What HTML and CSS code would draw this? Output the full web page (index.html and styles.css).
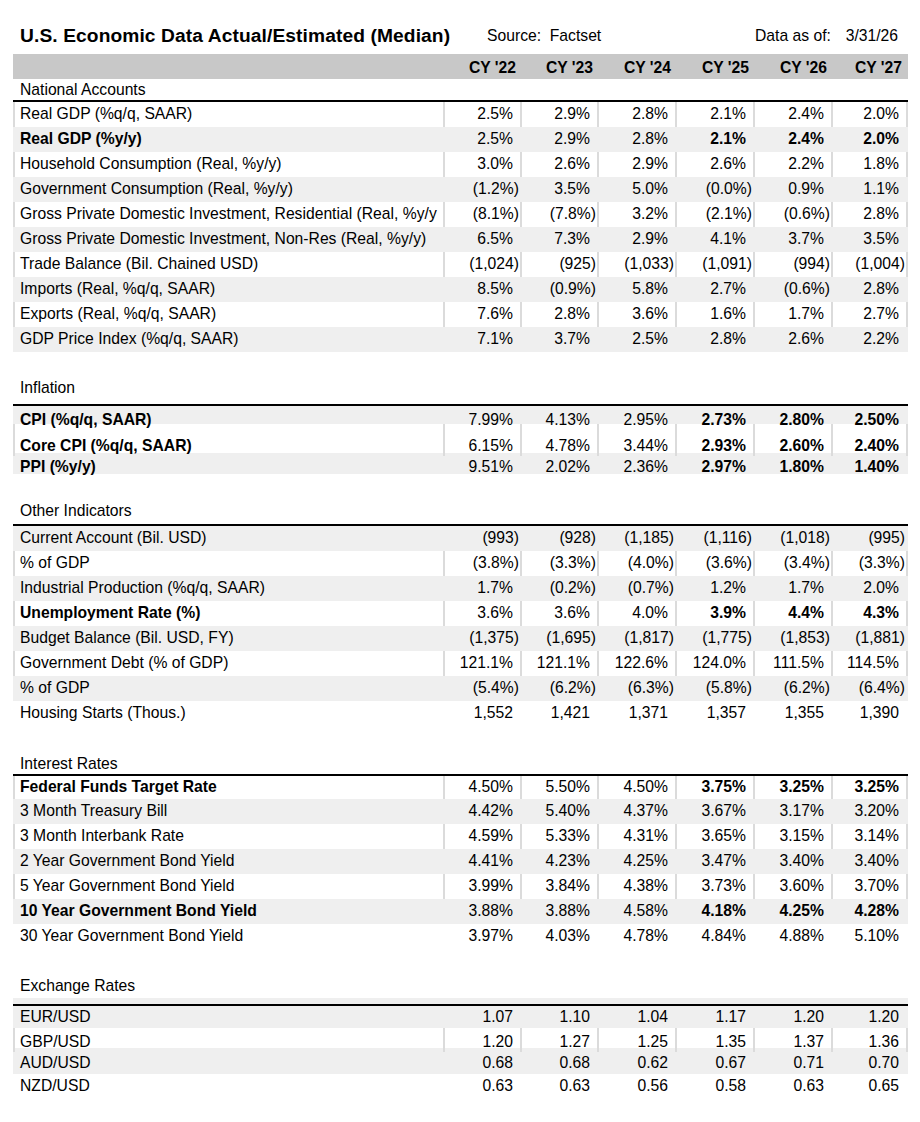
FILE: index.html
```html
<!DOCTYPE html>
<html lang="en">
<head>
<meta charset="utf-8">
<title>U.S. Economic Data Actual/Estimated (Median)</title>
<link rel="stylesheet" href="styles.css">
</head>
<body>
<div class="sheet">
  <div class="grid title-row">
    <div class="title">U.S. Economic Data Actual/Estimated (Median)</div>
    <div class="source">Source:&nbsp; Factset</div>
    <div class="asof-label">Data as of:</div>
    <div class="asof-date">3/31/26</div>
  </div>

  <div class="grid head-bar">
    <div class="c"></div>
    <div class="c h">CY '22</div><div class="c h">CY '23</div><div class="c h">CY '24</div>
    <div class="c h">CY '25</div><div class="c h">CY '26</div><div class="c h">CY '27</div>
  </div>

  <div class="sec-head sec-na">National Accounts</div>
  <div class="grid row sep"><div class="c l">Real GDP (%q/q, SAAR)</div><div class="c v">2.5%</div><div class="c v">2.9%</div><div class="c v">2.8%</div><div class="c v">2.1%</div><div class="c v">2.4%</div><div class="c v">2.0%</div></div>
  <div class="grid row shade"><div class="c l b">Real GDP (%y/y)</div><div class="c v">2.5%</div><div class="c v">2.9%</div><div class="c v">2.8%</div><div class="c v b">2.1%</div><div class="c v b">2.4%</div><div class="c v b">2.0%</div></div>
  <div class="grid row sep"><div class="c l">Household Consumption (Real, %y/y)</div><div class="c v">3.0%</div><div class="c v">2.6%</div><div class="c v">2.9%</div><div class="c v">2.6%</div><div class="c v">2.2%</div><div class="c v">1.8%</div></div>
  <div class="grid row shade"><div class="c l">Government Consumption (Real, %y/y)</div><div class="c v n">(1.2%)</div><div class="c v">3.5%</div><div class="c v">5.0%</div><div class="c v n">(0.0%)</div><div class="c v">0.9%</div><div class="c v">1.1%</div></div>
  <div class="grid row sep"><div class="c l">Gross Private Domestic Investment, Residential (Real, %y/y</div><div class="c v n">(8.1%)</div><div class="c v n">(7.8%)</div><div class="c v">3.2%</div><div class="c v n">(2.1%)</div><div class="c v n">(0.6%)</div><div class="c v">2.8%</div></div>
  <div class="grid row shade"><div class="c l">Gross Private Domestic Investment, Non-Res (Real, %y/y)</div><div class="c v">6.5%</div><div class="c v">7.3%</div><div class="c v">2.9%</div><div class="c v">4.1%</div><div class="c v">3.7%</div><div class="c v">3.5%</div></div>
  <div class="grid row sep"><div class="c l">Trade Balance (Bil. Chained USD)</div><div class="c v n">(1,024)</div><div class="c v n">(925)</div><div class="c v n">(1,033)</div><div class="c v n">(1,091)</div><div class="c v n">(994)</div><div class="c v n">(1,004)</div></div>
  <div class="grid row shade"><div class="c l">Imports (Real, %q/q, SAAR)</div><div class="c v">8.5%</div><div class="c v n">(0.9%)</div><div class="c v">5.8%</div><div class="c v">2.7%</div><div class="c v n">(0.6%)</div><div class="c v">2.8%</div></div>
  <div class="grid row sep"><div class="c l">Exports (Real, %q/q, SAAR)</div><div class="c v">7.6%</div><div class="c v">2.8%</div><div class="c v">3.6%</div><div class="c v">1.6%</div><div class="c v">1.7%</div><div class="c v">2.7%</div></div>
  <div class="grid row shade"><div class="c l">GDP Price Index (%q/q, SAAR)</div><div class="c v">7.1%</div><div class="c v">3.7%</div><div class="c v">2.5%</div><div class="c v">2.8%</div><div class="c v">2.6%</div><div class="c v">2.2%</div></div>

  <div class="sec-head sec-infl">Inflation</div>
  <div class="grid row shade row-cpi"><div class="c l b">CPI (%q/q, SAAR)</div><div class="c v">7.99%</div><div class="c v">4.13%</div><div class="c v">2.95%</div><div class="c v b">2.73%</div><div class="c v b">2.80%</div><div class="c v b">2.50%</div></div>
  <div class="grid row sep row-core"><div class="c l b">Core CPI (%q/q, SAAR)</div><div class="c v">6.15%</div><div class="c v">4.78%</div><div class="c v">3.44%</div><div class="c v b">2.93%</div><div class="c v b">2.60%</div><div class="c v b">2.40%</div></div>
  <div class="grid row shade row-ppi"><div class="c l b">PPI (%y/y)</div><div class="c v">9.51%</div><div class="c v">2.02%</div><div class="c v">2.36%</div><div class="c v b">2.97%</div><div class="c v b">1.80%</div><div class="c v b">1.40%</div></div>

  <div class="sec-head sec-other">Other Indicators</div>
  <div class="grid row shade"><div class="c l">Current Account (Bil. USD)</div><div class="c v n">(993)</div><div class="c v n">(928)</div><div class="c v n">(1,185)</div><div class="c v n">(1,116)</div><div class="c v n">(1,018)</div><div class="c v n">(995)</div></div>
  <div class="grid row sep"><div class="c l">% of GDP</div><div class="c v n">(3.8%)</div><div class="c v n">(3.3%)</div><div class="c v n">(4.0%)</div><div class="c v n">(3.6%)</div><div class="c v n">(3.4%)</div><div class="c v n">(3.3%)</div></div>
  <div class="grid row shade"><div class="c l">Industrial Production (%q/q, SAAR)</div><div class="c v">1.7%</div><div class="c v n">(0.2%)</div><div class="c v n">(0.7%)</div><div class="c v">1.2%</div><div class="c v">1.7%</div><div class="c v">2.0%</div></div>
  <div class="grid row sep"><div class="c l b">Unemployment Rate (%)</div><div class="c v">3.6%</div><div class="c v">3.6%</div><div class="c v">4.0%</div><div class="c v b">3.9%</div><div class="c v b">4.4%</div><div class="c v b">4.3%</div></div>
  <div class="grid row shade"><div class="c l">Budget Balance (Bil. USD, FY)</div><div class="c v n">(1,375)</div><div class="c v n">(1,695)</div><div class="c v n">(1,817)</div><div class="c v n">(1,775)</div><div class="c v n">(1,853)</div><div class="c v n">(1,881)</div></div>
  <div class="grid row sep"><div class="c l">Government Debt (% of GDP)</div><div class="c v">121.1%</div><div class="c v">121.1%</div><div class="c v">122.6%</div><div class="c v">124.0%</div><div class="c v">111.5%</div><div class="c v">114.5%</div></div>
  <div class="grid row shade"><div class="c l">% of GDP</div><div class="c v n">(5.4%)</div><div class="c v n">(6.2%)</div><div class="c v n">(6.3%)</div><div class="c v n">(5.8%)</div><div class="c v n">(6.2%)</div><div class="c v n">(6.4%)</div></div>
  <div class="grid row"><div class="c l">Housing Starts (Thous.)</div><div class="c v">1,552</div><div class="c v">1,421</div><div class="c v">1,371</div><div class="c v">1,357</div><div class="c v">1,355</div><div class="c v">1,390</div></div>

  <div class="sec-head sec-rates">Interest Rates</div>
  <div class="grid row sep row-fed"><div class="c l b">Federal Funds Target Rate</div><div class="c v">4.50%</div><div class="c v">5.50%</div><div class="c v">4.50%</div><div class="c v b">3.75%</div><div class="c v b">3.25%</div><div class="c v b">3.25%</div></div>
  <div class="grid row shade"><div class="c l">3 Month Treasury Bill</div><div class="c v">4.42%</div><div class="c v">5.40%</div><div class="c v">4.37%</div><div class="c v">3.67%</div><div class="c v">3.17%</div><div class="c v">3.20%</div></div>
  <div class="grid row sep"><div class="c l">3 Month Interbank Rate</div><div class="c v">4.59%</div><div class="c v">5.33%</div><div class="c v">4.31%</div><div class="c v">3.65%</div><div class="c v">3.15%</div><div class="c v">3.14%</div></div>
  <div class="grid row shade"><div class="c l">2 Year Government Bond Yield</div><div class="c v">4.41%</div><div class="c v">4.23%</div><div class="c v">4.25%</div><div class="c v">3.47%</div><div class="c v">3.40%</div><div class="c v">3.40%</div></div>
  <div class="grid row sep"><div class="c l">5 Year Government Bond Yield</div><div class="c v">3.99%</div><div class="c v">3.84%</div><div class="c v">4.38%</div><div class="c v">3.73%</div><div class="c v">3.60%</div><div class="c v">3.70%</div></div>
  <div class="grid row shade"><div class="c l b">10 Year Government Bond Yield</div><div class="c v">3.88%</div><div class="c v">3.88%</div><div class="c v">4.58%</div><div class="c v b">4.18%</div><div class="c v b">4.25%</div><div class="c v b">4.28%</div></div>
  <div class="grid row"><div class="c l">30 Year Government Bond Yield</div><div class="c v">3.97%</div><div class="c v">4.03%</div><div class="c v">4.78%</div><div class="c v">4.84%</div><div class="c v">4.88%</div><div class="c v">5.10%</div></div>

  <div class="sec-head sec-fx">Exchange Rates</div>
  <div class="fx-strip"></div>
  <div class="grid row shade row-eur"><div class="c l">EUR/USD</div><div class="c v">1.07</div><div class="c v">1.10</div><div class="c v">1.04</div><div class="c v">1.17</div><div class="c v">1.20</div><div class="c v">1.20</div></div>
  <div class="grid row sep row-gbp"><div class="c l">GBP/USD</div><div class="c v">1.20</div><div class="c v">1.27</div><div class="c v">1.25</div><div class="c v">1.35</div><div class="c v">1.37</div><div class="c v">1.36</div></div>
  <div class="grid row shade row-aud"><div class="c l">AUD/USD</div><div class="c v">0.68</div><div class="c v">0.68</div><div class="c v">0.62</div><div class="c v">0.67</div><div class="c v">0.71</div><div class="c v">0.70</div></div>
  <div class="grid row"><div class="c l">NZD/USD</div><div class="c v">0.63</div><div class="c v">0.63</div><div class="c v">0.56</div><div class="c v">0.58</div><div class="c v">0.63</div><div class="c v">0.65</div></div>
</div>
</body>
</html>
```

FILE: styles.css
```css
* { box-sizing: border-box; }

html, body {
  margin: 0;
  padding: 0;
  background: #ffffff;
}

body {
  font-family: "Liberation Sans", Arial, sans-serif;
  font-size: 15.7px;
  color: #000;
}

.sheet {
  width: 895px;
  margin-left: 13px;
  padding-top: 17px;
}

.grid {
  display: grid;
  grid-template-columns: 432px 77px 77px 78px 78px 78px 75px;
}

/* title line */
.title-row {
  height: 37px;
  align-items: center;
  white-space: nowrap;
}
.title {
  font-size: 19.2px;
  font-weight: bold;
  padding-left: 7px;
  letter-spacing: 0.1px;
}
.source {
  grid-column: 2 / 4;
  padding-left: 42px;
}
.asof-label {
  grid-column: 6 / 7;
  text-align: right;
  padding-right: 7px;
}
.asof-date {
  grid-column: 7 / 8;
  text-align: right;
  padding-right: 10px;
}

/* column header bar */
.head-bar {
  height: 25px;
  background: #c8c8c8;
}
.head-bar .c {
  padding-top: 4px;
  padding-right: 4px;
}
.h {
  font-weight: bold;
  text-align: right;
}

/* cells */
.c {
  line-height: 20px;
  white-space: nowrap;
  overflow: visible;
  border-right: 2px solid transparent;
}
.c:first-child {
  border-left: 2px solid transparent;
}
.l {
  padding-left: 5px;
  overflow: hidden;
}
.v {
  text-align: right;
  padding-right: 7px;
}
.v.n {
  padding-right: 1px;
}
.b { font-weight: bold; }

/* rows */
.row {
  height: 25px;
}
.row .c {
  padding-top: 2px;
}
.shade {
  background: #efefef;
}
.sep .c {
  border-color: #dbdbdb;
}

.row-cpi { height: 18px; }
.row-cpi .c { padding-top: 4px; }
.row-core { height: 29px; }
.row-core .c { padding-top: 12px; }
.row-ppi { height: 21px; }
.row-ppi .c { padding-top: 4px; }

.row-fed { height: 23px; }
.row-fed .c { padding-top: 1px; }

.row-eur { height: 22px; }
.row-eur .c { padding-top: 1px; }
.row-gbp { height: 20px; }
.row-gbp .c { padding-top: 4px; }
.row-aud { height: 26px; }
.row-aud .c { padding-top: 5px; }

/* section headings */
.sec-head {
  display: flex;
  align-items: flex-end;
  line-height: 20px;
  padding-left: 7px;
  border-bottom: 2px solid #000;
}
.sec-na { height: 23px; }
.sec-infl { height: 54px; padding-bottom: 6px; }
.sec-other { height: 52px; padding-bottom: 3px; }
.sec-rates { height: 50px; }
.sec-fx {
  height: 49px;
  padding-bottom: 2px;
  border-bottom: 0;
}
.fx-strip {
  height: 8px;
  background: #efefef;
  border-bottom: 2px solid #000;
}
```
